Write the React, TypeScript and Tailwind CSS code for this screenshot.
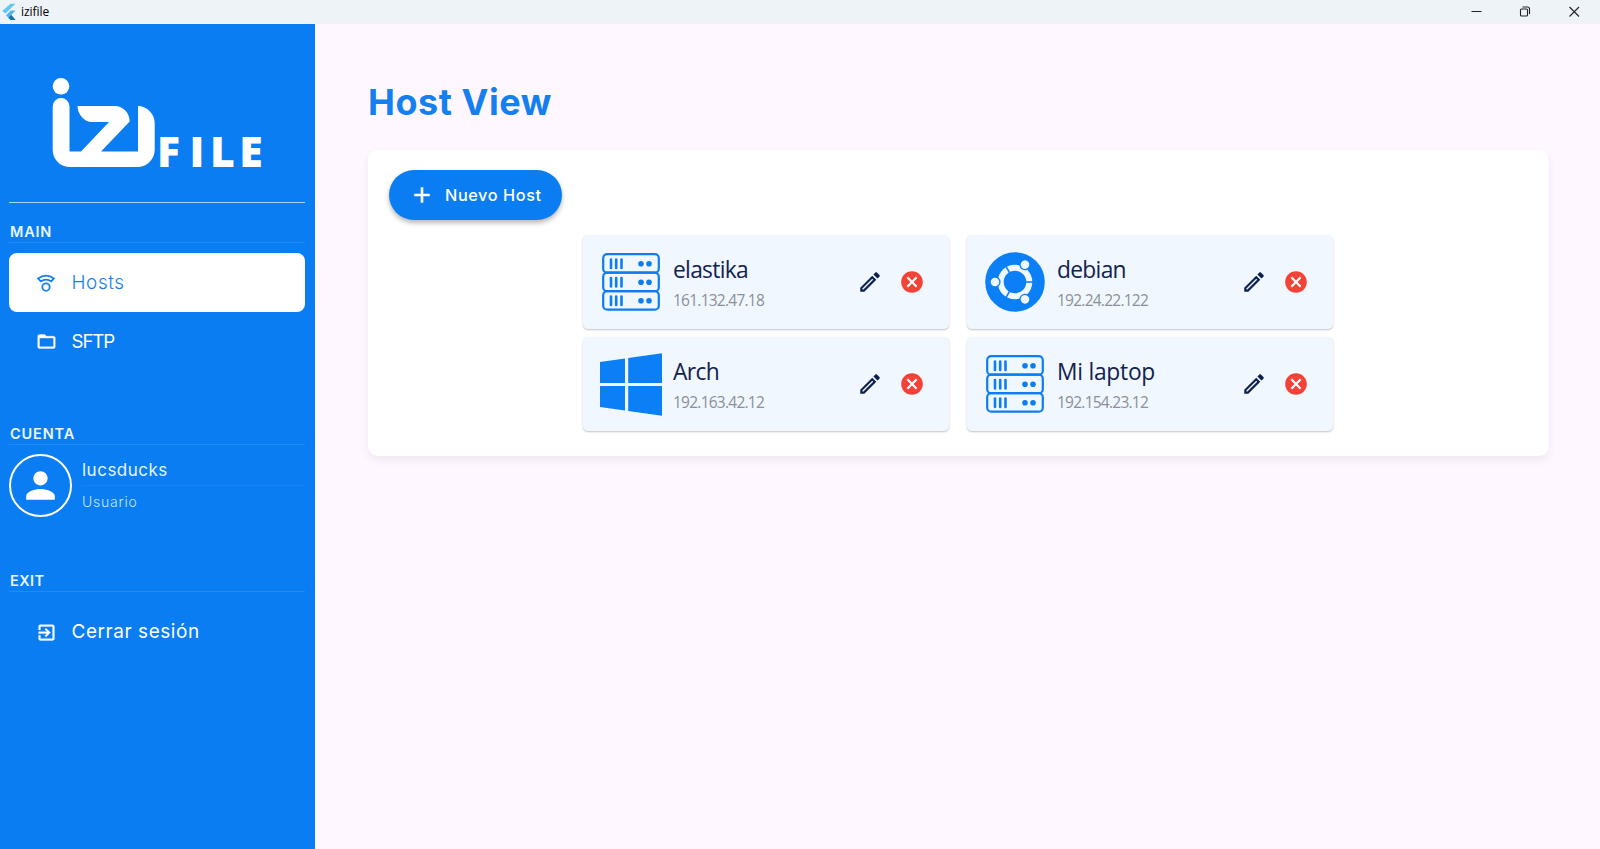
import React from "react";
import { MdAdd, MdCancel, MdExitToApp, MdFolderOpen, MdOutlineEdit, MdPerson } from "react-icons/md";

function Logo() {
  return (
    <svg width="315" height="120" viewBox="0 0 315 120" fill="#fff" role="img">
      <circle cx="61" cy="26.300" r="8.300" />
      <path d="M52.700 46.500a8.400 8.400 0 0 1 16.800 0v44.900H81L109 62H92C84 62 77.500 54 77.500 46H115C123 46 129.700 53 129.700 61.500L101 91.400h37V46C147 46 154.700 54 154.700 63V90C154.700 99 147 106.900 138.500 106.900H69C60 106.900 52.700 99 52.700 90Z" />
      <text y="106.900" x="156.900 189.600 210.100 239.200" fontSize="42.700" fontWeight="800" fontFamily="Open Sans, sans-serif">FILE</text>
    </svg>
  );
}

function HostsIcon() {
  return (
    <svg width="20" height="20" viewBox="0 0 20 20" fill="none" stroke="#1680ee" strokeWidth="1.800" strokeLinejoin="round">
      <path d="M2 5.400C7 2 13 2 18 5.400L15.200 8.300C12 6.200 8 6.200 4.800 8.300Z" />
      <circle cx="10" cy="14.100" r="3.700" />
    </svg>
  );
}

function ServerIcon() {
  return (
    <svg width="58" height="58" viewBox="0 0 58 58" fill="none" stroke="#0d7df2" strokeWidth="2.200">
      {[1.2, 19.7, 38.2].map((y) => (
        <g key={y}>
          <rect x="1.200" y={y} width="55.600" height="18.500" rx="4" />
          <path d={`M9 ${y + 5.3}v8.500M14.200 ${y + 5.3}v8.500M19.500 ${y + 5.3}v8.500`} strokeWidth="2.600" strokeLinecap="round" />
          <circle cx="39" cy={y + 9.5} r="2.800" fill="#0d7df2" stroke="none" />
          <circle cx="47" cy={y + 9.5} r="2.800" fill="#0d7df2" stroke="none" />
        </g>
      ))}
    </svg>
  );
}

function UbuntuIcon() {
  return (
    <svg width="60" height="60" viewBox="-30 -30 60 60">
      <circle r="29.800" fill="#0b7ff5" />
      <circle r="14.300" fill="none" stroke="#f0f7ff" strokeWidth="6" />
      {[0, 120, 240].map((a) => (
        <g key={a} transform={`rotate(${a})`}>
          <path d="M10 0H19" stroke="#0b7ff5" strokeWidth="1.600" />
          <circle cx="-20" cy="0" r="5.600" fill="#0b7ff5" />
          <circle cx="-20" cy="0" r="4.300" fill="#f0f7ff" />
        </g>
      ))}
    </svg>
  );
}

function WindowsIcon() {
  return (
    <svg width="62" height="63" viewBox="0 0 62 63" fill="#0b7ff5">
      <path d="M0 9L25 5.600V30H0ZM28.200 5.100L62 .3V30H28.200ZM0 33H25V57.500L0 54ZM28.200 33H62V62.700L28.200 58Z" />
    </svg>
  );
}

function FlutterIcon() {
  return (
    <svg width="14" height="18" viewBox="0 0 14 18">
      <path d="M8.500 .8H13.500L3.500 10.500L.2 8Z" fill="#62c8f5" />
      <path d="M8.800 7.500H13.500L9.300 12L13.500 17H8.500L4 12.300Z" fill="#4fb4ea" />
      <path d="M6.500 14.800L9.300 12L13.500 17H8.500Z" fill="#1a6fb0" />
    </svg>
  );
}

function SectionTitle({ children, className }: { children: React.ReactNode; className: string }) {
  return (
    <div className={`h-[26px] border-b border-white/10 pl-px text-[14.500px] font-semibold text-[#eaf5ff] ${className}`}>
      {children}
    </div>
  );
}

type Host = { name: string; ip: string; icon: React.ReactNode; nameClass: string };

const hosts: Host[] = [
  { name: "elastika", ip: "161.132.47.18", icon: <ServerIcon />, nameClass: "tracking-[-0.700px]" },
  { name: "debian", ip: "192.24.22.122", icon: <UbuntuIcon />, nameClass: "tracking-[-0.700px]" },
  { name: "Arch", ip: "192.163.42.12", icon: <WindowsIcon />, nameClass: "tracking-[-0.600px]" },
  { name: "Mi laptop", ip: "192.154.23.12", icon: <ServerIcon />, nameClass: "tracking-[-0.250px]" },
];

function HostCard({ host }: { host: Host }) {
  return (
    <div className="flex h-[94px] items-center rounded-[5px] bg-[#f0f7ff] pr-[24px] pl-4 font-['Open_Sans',sans-serif] shadow-[0_1px_2px_rgba(0,0,0,0.24)]">
      <div className="flex w-[63px] items-center justify-center">{host.icon}</div>
      <div className="ml-[10.500px] flex-1">
        <div className={`text-[22.800px] leading-8 text-[#12224f] ${host.nameClass}`}>{host.name}</div>
        <div className="mt-[3px] text-[15.500px] leading-[22px] tracking-[-0.750px] text-[#8b9096]">{host.ip}</div>
      </div>
      <MdOutlineEdit size={26} color="#0d1f4d" />
      <div className="ml-4 flex items-center bg-[radial-gradient(circle,white_40%,transparent_42%)]">
        <MdCancel size={26} color="#f44336" />
      </div>
    </div>
  );
}

export default function App() {
  return (
    <div className="flex h-[849px] w-[1600px] flex-col overflow-hidden bg-[#fef7ff] font-['Inter',sans-serif]">
      <header className="flex h-6 shrink-0 items-center bg-[#eef3f8] pl-[2px]">
        <FlutterIcon />
        <span className="ml-[5px] font-['Open_Sans',sans-serif] text-[12px] tracking-[-0.050px] text-black">izifile</span>
        <svg className="ml-auto" width="140" height="24" viewBox="0 0 140 24" fill="none" stroke="#20242a" strokeWidth="1.100">
          <path d="M11.500 11.500H21.500M109.500 7L119 16.500M119 7L109.500 16.500" />
          <rect x="60.500" y="9" width="7" height="7" rx="1" />
          <path d="M62.500 7H67.500Q69.500 7 69.500 9V14" />
        </svg>
      </header>
      <div className="flex flex-1">
        <aside className="w-[315.400px] shrink-0 bg-[#0a7df3] text-white">
          <div className="pt-9">
            <Logo />
          </div>
          <div className="pr-[10px] pl-[9px]">
            <div className="mt-[22px] h-px bg-white/65" />
            <div className="mt-[14px]">
              <SectionTitle className="pt-[4px] leading-[22px] tracking-[0.800px]">MAIN</SectionTitle>
            </div>
            <div className="mt-[10px] flex h-[59px] items-center rounded-lg bg-white pl-[27px] text-[#1680ee]">
              <HostsIcon />
              <span className="ml-[15.500px] pt-px text-[18.900px] font-light tracking-[0.600px]">Hosts</span>
            </div>
            <div className="flex h-[59px] items-center pl-[27px]">
              <MdFolderOpen size={21} stroke="currentColor" strokeWidth={0.4} className="-ml-[0.500px] [&>path:first-child]:stroke-none" />
              <span className="ml-[15px] pt-[1.500px] text-[18.700px] tracking-[-1.100px]">SFTP</span>
            </div>
            <div className="mt-[48px]">
              <SectionTitle className="pt-[4px] leading-[22px] tracking-[0.850px]">CUENTA</SectionTitle>
            </div>
            <div className="mt-[9px] flex items-center">
              <div className="flex size-[63px] items-center justify-center rounded-full border-2 border-white">
                <MdPerson size={43} />
              </div>
              <div className="ml-[10px] flex-1">
                <div className="h-8 border-b border-white/5 text-[17px] leading-[32px] tracking-[0.500px] text-[#e6f4ff]">lucsducks</div>
                <div className="h-[31px] text-[14px] leading-[31px] font-light tracking-[0.750px] text-[#c8e4ff]">Usuario</div>
              </div>
            </div>
            <div className="mt-[49px]">
              <SectionTitle className="pt-[4px] leading-[22px] tracking-[0.400px]">EXIT</SectionTitle>
            </div>
            <div className="mt-[10.500px] flex h-[59px] items-center pl-[27px]">
              <MdExitToApp size={21} stroke="currentColor" strokeWidth={0.4} className="-ml-[0.500px] [&>path:first-child]:stroke-none" />
              <span className="ml-[15px] text-[19px] tracking-[0.550px]">Cerrar sesión</span>
            </div>
          </div>
        </aside>
        <main className="flex-1 pt-[53px] pr-[51px] pl-[52.600px]">
          <h1 className="h-12 text-[36px] leading-[50px] font-bold tracking-[0.550px] text-[#147fee]">Host View</h1>
          <section className="mt-[24.500px] h-[306.500px] rounded-[10px] bg-white pt-[20.500px] pl-[21px] shadow-[0_4px_8px_rgba(60,0,80,0.07)]">
            <button className="flex h-[50px] w-[173.500px] items-center rounded-full bg-[#0a7df3] pl-[20.500px] text-white shadow-[0_3px_5px_rgba(0,0,0,0.28)]">
              <MdAdd size={26} stroke="currentColor" strokeWidth={0.4} className="[&>path:first-child]:stroke-none" />
              <span className="ml-[9.500px] text-[16.300px] font-medium tracking-[0.580px]">Nuevo Host</span>
            </button>
            <div className="mt-[15px] ml-[194.500px] grid w-[750px] grid-cols-2 gap-x-[18px] gap-y-[8px]">
              {hosts.map((h) => (
                <HostCard key={h.name} host={h} />
              ))}
            </div>
          </section>
        </main>
      </div>
    </div>
  );
}
